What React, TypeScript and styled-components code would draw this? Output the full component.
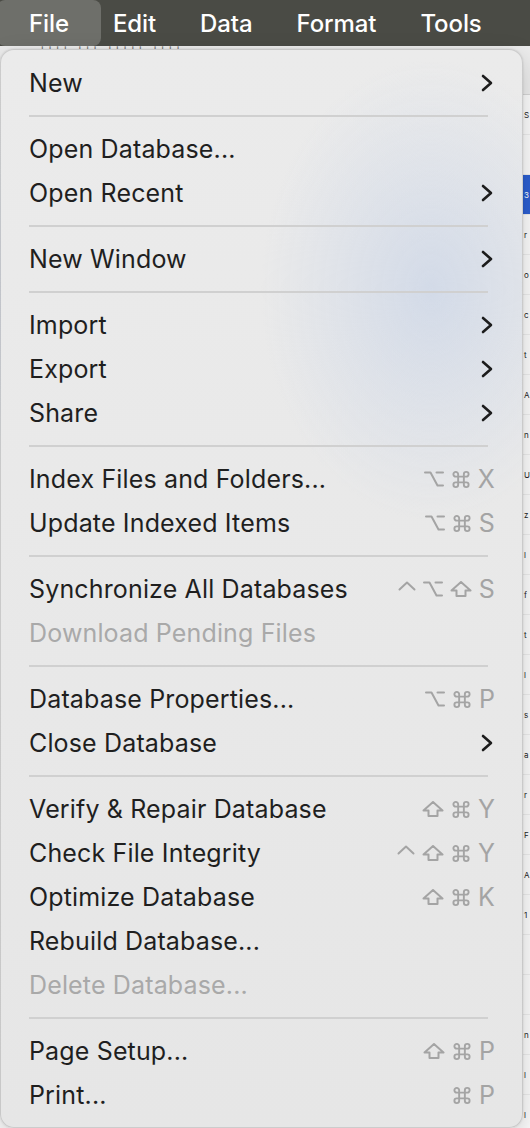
import React from "react";
import styled, { createGlobalStyle } from "styled-components";

const Global = createGlobalStyle`
  html, body { margin: 0; padding: 0; }
  body {
    width: 530px;
    height: 1128px;
    overflow: hidden;
    background: #f7f7f7;
    font-family: Inter, "Noto Sans", "Liberation Sans", sans-serif;
  }
`;

const Screen = styled.div`
  position: relative;
  width: 530px;
  height: 1128px;
  overflow: hidden;
`;

const MenuBar = styled.div`
  display: flex;
  align-items: stretch;
  height: 46px;
  padding-left: 7px;
  background: #4a4b45;
`;

const MenuTitle = styled.div<{ $active?: boolean }>`
  position: relative;
  display: flex;
  align-items: center;
  padding: 0 22px;
  color: #ffffff;
  font-size: 24px;
  font-weight: 500;
  letter-spacing: -0.1px;
  &::before {
    content: "";
    position: absolute;
    top: 0;
    bottom: 0;
    left: -10px;
    right: -10px;
    border-radius: 8px;
    background: ${(p) => (p.$active ? "rgba(255,255,255,0.2)" : "transparent")};
  }
  span { position: relative; }
`;

const Doc = styled.div`
  display: flex;
  flex-direction: column;
  background: #fbfbfb;
`;

const DocHeader = styled.div`
  height: 48px;
  background: #ececec;
  border-bottom: 1px solid #d6d6d6;
  color: #777;
  font-size: 14px;
  padding-left: 40px;
  display: flex;
  align-items: flex-start;
  letter-spacing: 3px;
`;

const DocRow = styled.div<{ $selected?: boolean }>`
  display: grid;
  grid-template-columns: 524px 6px;
  height: 39px;
  align-items: center;
  border-bottom: 1px solid #ececec;
  background: ${(p) => (p.$selected ? "#2c5fd1" : "transparent")};
  color: ${(p) => (p.$selected ? "#fff" : "#1d1d1d")};
  font-size: 8px;
  white-space: nowrap;
  overflow: hidden;
`;

const Panel = styled.div`
  position: absolute;
  top: 49px;
  left: 0;
  width: 523px;
  box-sizing: border-box;
  padding: 11px 0 10px;
  border-radius: 14px;
  border: 1px solid rgba(0, 0, 0, 0.13);
  background:
    radial-gradient(ellipse 170px 230px at 430px 240px, rgba(201, 212, 231, 0.7), rgba(201, 212, 231, 0) 100%),
    linear-gradient(180deg, #ebebeb 0%, #e8e8e8 60%, #e6e6e6 100%);
  box-shadow: 0 8px 24px rgba(0, 0, 0, 0.18), 0 0 2px rgba(0, 0, 0, 0.15);
`;

const Item = styled.div<{ $disabled?: boolean }>`
  display: flex;
  align-items: center;
  justify-content: space-between;
  height: 44px;
  padding: 0 27px 0 28px;
  font-size: 25px;
  line-height: 44px;
  color: ${(p) => (p.$disabled ? "#a9a9a9" : "#1f1f1f")};
  letter-spacing: 0.15px;
  white-space: nowrap;
`;

const Separator = styled.div`
  height: 22px;
  display: flex;
  align-items: center;
  padding: 0 34px 0 28px;
  &::after {
    content: "";
    flex: 1;
    height: 2px;
    background: #d0d0d0;
  }
`;

const Shortcut = styled.div`
  display: inline-flex;
  align-items: center;
  gap: 7px;
  color: #a4a4a4;
`;

const Key = styled.span`
  font-size: 25px;
  color: #a4a4a4;
`;

const Glyph = styled.svg`
  display: block;
  fill: none;
  stroke: #a4a4a4;
  stroke-width: 2;
  stroke-linecap: round;
  stroke-linejoin: round;
`;

const ChevronSvg = styled.svg`
  display: block;
  fill: none;
  stroke: #1c1c1c;
  stroke-width: 2.6;
  stroke-linecap: round;
  stroke-linejoin: round;
  margin-right: 2px;
`;

const Chevron = () => (
  <ChevronSvg width="12" height="18" viewBox="0 0 12 18">
    <polyline points="2,2 10,9 2,16" />
  </ChevronSvg>
);

const KeyGlyph = ({ k }: { k: string }) => {
  if (k === "opt")
    return (
      <Glyph width="20" height="16" viewBox="0 0 20 16">
        <path d="M1 1.5 H6.5 L13.5 14.5 H19 M12.5 1.5 H19" />
      </Glyph>
    );
  if (k === "cmd")
    return (
      <Glyph width="20" height="19" viewBox="0 0 20 20">
        <path d="M7 7V4.5A2.5 2.5 0 1 0 4.5 7H15.5A2.5 2.5 0 1 0 13 4.5V15.5A2.5 2.5 0 1 0 15.5 13H4.5A2.5 2.5 0 1 0 7 15.5Z" />
      </Glyph>
    );
  if (k === "shift")
    return (
      <Glyph width="22" height="16" viewBox="0 0 22 16">
        <path d="M11 1 L20.5 9.5 H15.5 V15 H6.5 V9.5 H1.5 Z" />
      </Glyph>
    );
  if (k === "ctrl")
    return (
      <Glyph width="18" height="16" viewBox="0 0 18 16">
        <polyline points="1.5,8.5 9,1.5 16.5,8.5" />
      </Glyph>
    );
  return <Key>{k}</Key>;
};

type Entry =
  | { sep: true }
  | { label: string; sub?: boolean; keys?: string[]; disabled?: boolean };

const entries: Entry[] = [
  { label: "New", sub: true },
  { sep: true },
  { label: "Open Database..." },
  { label: "Open Recent", sub: true },
  { sep: true },
  { label: "New Window", sub: true },
  { sep: true },
  { label: "Import", sub: true },
  { label: "Export", sub: true },
  { label: "Share", sub: true },
  { sep: true },
  { label: "Index Files and Folders...", keys: ["opt", "cmd", "X"] },
  { label: "Update Indexed Items", keys: ["opt", "cmd", "S"] },
  { sep: true },
  { label: "Synchronize All Databases", keys: ["ctrl", "opt", "shift", "S"] },
  { label: "Download Pending Files", disabled: true },
  { sep: true },
  { label: "Database Properties...", keys: ["opt", "cmd", "P"] },
  { label: "Close Database", sub: true },
  { sep: true },
  { label: "Verify & Repair Database", keys: ["shift", "cmd", "Y"] },
  { label: "Check File Integrity", keys: ["ctrl", "shift", "cmd", "Y"] },
  { label: "Optimize Database", keys: ["shift", "cmd", "K"] },
  { label: "Rebuild Database..." },
  { label: "Delete Database...", disabled: true },
  { sep: true },
  { label: "Page Setup...", keys: ["shift", "cmd", "P"] },
  { label: "Print...", keys: ["cmd", "P"] },
];

const docRows = [
  "S", "", "3", "r", "o", "c", "t", "A", "n", "U", "z", "l", "f", "t", "l", "s",
  "a", "r", "F", "A", "1", "", "", "n", "l", "l",
];

export default function App() {
  return (
    <>
      <Global />
      <Screen>
        <MenuBar>
          <MenuTitle $active><span>File</span></MenuTitle>
          <MenuTitle><span>Edit</span></MenuTitle>
          <MenuTitle><span>Data</span></MenuTitle>
          <MenuTitle><span>Format</span></MenuTitle>
          <MenuTitle><span>Tools</span></MenuTitle>
        </MenuBar>
        <Doc>
          <DocHeader>|||| ||| ||||| ||||</DocHeader>
          {docRows.map((t, i) => (
            <DocRow key={i} $selected={i === 2}>
              <span />
              <span>{t}</span>
            </DocRow>
          ))}
        </Doc>
        <Panel>
          {entries.map((e, i) =>
            "sep" in e ? (
              <Separator key={i} />
            ) : (
              <Item key={i} $disabled={e.disabled}>
                <span>{e.label}</span>
                {e.sub && <Chevron />}
                {e.keys && (
                  <Shortcut>
                    {e.keys.map((k, j) => (
                      <KeyGlyph key={j} k={k} />
                    ))}
                  </Shortcut>
                )}
              </Item>
            )
          )}
        </Panel>
      </Screen>
    </>
  );
}
